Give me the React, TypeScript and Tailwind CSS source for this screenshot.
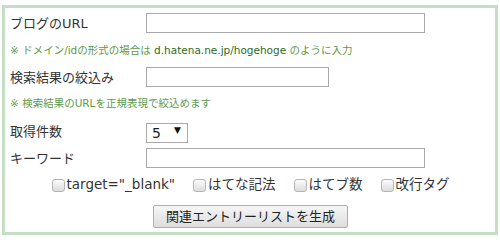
import { useState } from 'react'

const FONT = "font-['DejaVu_Sans','Noto_Sans_CJK_JP',sans-serif]"

const OPTIONS = [
  { key: 'blank', label: 'target="_blank"' },
  { key: 'hatena', label: 'はてな記法' },
  { key: 'hatebu', label: 'はてブ数' },
  { key: 'br', label: '改行タグ' },
]

function Row({ label, children }: { label: string; children: React.ReactNode }) {
  return (
    <div className="flex items-center h-[20px]">
      <span className="w-[136px] shrink-0 text-[13px] leading-none text-[#333]">{label}</span>
      {children}
    </div>
  )
}

export default function App() {
  const [count, setCount] = useState('5')
  const [checked, setChecked] = useState<Record<string, boolean>>({})

  return (
    <div className={`${FONT} bg-white w-[500px] h-[239px] pt-[5px] pl-[2px]`}>
      <div className="w-[496px] h-[230px] border-[3px] border-[#c5dfc5] pl-[5px] pt-[5px]">
        <Row label="ブログのURL">
          <input className="w-[279px] h-[20px] border border-[#a9a9a9] outline-none px-1 text-[13px]" />
        </Row>
        <p className="mt-[9px] mb-[9px] h-[16px] leading-[16px] text-[10.5px] text-[#5e9a4c]">
          ※ ドメイン/idの形式の場合は <span className="text-[#2f6b23]">d.hatena.ne.jp/hogehoge</span> のように入力
        </p>
        <Row label="検索結果の絞込み">
          <input className="w-[183px] h-[20px] border border-[#a9a9a9] outline-none px-1 text-[13px]" />
        </Row>
        <p className="mt-[8px] mb-[10px] h-[16px] leading-[16px] text-[10.5px] text-[#5e9a4c]">
          ※ 検索結果のURLを正規表現で絞込めます
        </p>
        <Row label="取得件数">
          <div className="relative w-[42px] h-[20px]">
            <select
              value={count}
              onChange={e => setCount(e.target.value)}
              className="appearance-none w-full h-full border border-[#a9a9a9] bg-white pl-[5px] text-[14px] leading-none text-[#222] outline-none"
            >
              {['5', '10', '15', '20'].map(v => <option key={v} value={v}>{v}</option>)}
            </select>
            <span className="pointer-events-none absolute right-[7px] top-[5px] text-[9px] leading-none text-[#111]">▼</span>
          </div>
        </Row>
        <div className="mt-[7px]">
          <Row label="キーワード">
            <input className="w-[279px] h-[20px] border border-[#a9a9a9] outline-none px-1 text-[13px]" />
          </Row>
        </div>
        <div className="mt-[8px] h-[18px] flex items-center justify-center gap-[18px] pr-[4px]">
          {OPTIONS.map(o => (
            <label key={o.key} className="flex items-center gap-[2px] text-[13.5px] leading-none text-[#333]">
              <input
                type="checkbox"
                checked={!!checked[o.key]}
                onChange={() => setChecked(c => ({ ...c, [o.key]: !c[o.key] }))}
                className="appearance-none w-[13px] h-[13px] rounded-[3px] border border-[#b5b5b5] bg-gradient-to-b from-[#fcfcfc] to-[#dcdcdc] checked:bg-[#6a9ad8]"
              />
              {o.label}
            </label>
          ))}
        </div>
        <div className="mt-[11px] flex justify-center pr-[4px]">
          <button className="w-[195px] h-[23px] rounded-[2px] border border-[#adadad] bg-gradient-to-b from-[#f6f6f6] to-[#dedede] text-[13px] leading-none text-[#222]">
            関連エントリーリストを生成
          </button>
        </div>
      </div>
    </div>
  )
}
